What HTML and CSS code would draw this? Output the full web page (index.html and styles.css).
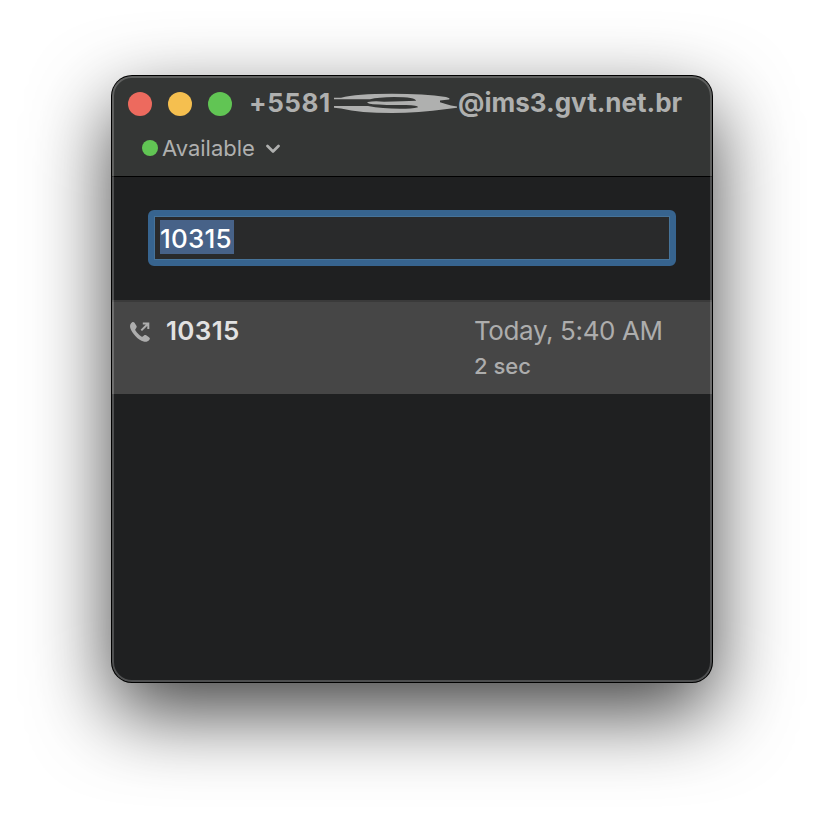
FILE: index.html
```html
<!DOCTYPE html>
<html lang="en">
<head>
<meta charset="utf-8">
<title>Phone</title>
<link rel="stylesheet" href="styles.css">
</head>
<body>
<main class="window">
  <header class="titlebar">
    <div class="title-row">
      <span class="light close"></span>
      <span class="light minimize"></span>
      <span class="light expand"></span>
      <h1 class="title"><span class="prefix">+5581</span><svg class="scribble" width="124" height="22" viewBox="0 0 124 22"><path d="M0 5.8H7Q22 1.8 58 1.8Q90 1.8 112 5Q117 6.3 115 7.5L106 8.6V10.2Q112 12 117 13.6L123 14.4V15.8L113 17Q84 21 58 21Q26 21 7 16.5L0 15.8V14H34Q48 16.8 66 16.8Q78 16.8 84 15.2Q84 13.4 72 13.1Q50 13 39 12.2Q31 11.1 34 10Q40 8.8 50 9.7Q70 9.5 82 8.8Q82 5 60 5Q44 5.2 36 7.3H0Z" fill="#afb0af"/></svg><span class="domain">@ims3.gvt.net.br</span></h1>
    </div>
    <div class="status">
      <span class="dot"></span>
      <span class="status-text">Available</span>
      <svg class="chevron" width="14" height="10" viewBox="0 0 14 10"><path d="M1.5 2L7 7.5L12.5 2" fill="none" stroke="#afb0af" stroke-width="2.7" stroke-linecap="round" stroke-linejoin="round"/></svg>
    </div>
  </header>
  <section class="dial">
    <div class="field"><span class="selected">10315</span></div>
  </section>
  <section class="call">
    <svg class="call-icon" width="22" height="22" viewBox="0 0 22 22"><path d="M2.2 1.2C3.1.6 3.9 1 4.5 1.8L6.4 4.8C6.9 5.6 6.8 6.3 6.2 7L5.4 8.2C5.1 8.6 5.2 9 5.5 9.5C7 11.8 9 13.9 11.4 15.4C11.9 15.7 12.3 15.7 12.7 15.4L14 14.4C14.7 13.8 15.4 13.8 16.2 14.3L19 16.2C20 16.9 20.2 17.7 19.4 18.7C17.9 20.5 16 21.2 13.6 20.5C7.9 18.8 1.8 12 .3 6.9C-.4 4.5.4 2.6 2.2 1.2Z" fill="#adadad"/><path d="M11.3 9.4L18 2.7M12.8 2.4H18.3V7.9" fill="none" stroke="#adadad" stroke-width="2"/></svg>
    <span class="number">10315</span>
    <div class="details"><span class="time">Today, 5:40 AM</span><span class="duration">2 sec</span></div>
  </section>
</main>
</body>
</html>
```
FILE: styles.css
```css
* { box-sizing: border-box; }
body {
  margin: 0;
  height: 830px;
  padding: 76px 112px;
  overflow: hidden;
  background: #fff;
  font-family: Inter, "Liberation Sans", sans-serif;
}
.window {
  position: relative;
  width: 600px;
  height: 606px;
  overflow: hidden;
  border-radius: 20px;
  background: #1f2021;
  box-shadow: 0 0 0 1px #000, 0 30px 80px rgba(0,0,0,.75);
}
.window::after {
  content: "";
  position: absolute;
  inset: 0;
  border: 2px solid rgba(255,255,255,.21);
  border-radius: 20px;
}
.titlebar {
  height: 101px;
  border-bottom: 1px solid #000;
  background: #343635;
  color: #afb0af;
}
.title-row {
  display: flex;
  align-items: center;
  height: 56px;
  padding-left: 16px;
}
.light {
  flex: none;
  width: 24px;
  height: 24px;
  margin-right: 16px;
  border-radius: 50%;
}
.close { background: #ed6a5e; }
.minimize { background: #f5bf4f; }
.expand { background: #61c554; }
.title {
  display: flex;
  align-items: center;
  margin: 0 0 2px 1px;
  font-size: 26px;
  font-weight: 700;
  line-height: 32px;
  white-space: nowrap;
}
.prefix { width: 85px; letter-spacing: .55px; }
.scribble { flex: none; width: 124px; margin-right: 0; }
.status {
  display: flex;
  align-items: center;
  height: 32px;
  padding-left: 30px;
  font-size: 22px;
}
.dot {
  width: 16px;
  height: 16px;
  margin-right: 4px;
  border-radius: 50%;
  background: #61c554;
}
.status-text { width: 104px; }
.chevron { margin-top: 2px; }
.dial { height: 123px; padding: 33px 36px 0; }
.field {
  display: flex;
  align-items: center;
  height: 56px;
  padding-left: 6px;
  border: 6px solid #37648f;
  border-radius: 6px;
  background: #292a2b;
  box-shadow: inset 0 0 0 1px #467399, inset 0 -1px 0 #687b86;
}
.selected {
  width: 74px;
  height: 34px;
  margin-top: -2px;
  background: #476288;
  color: #fff;
  font-size: 26px;
  font-weight: 500;
  letter-spacing: .2px;
  line-height: 37px;
}
.call {
  display: flex;
  height: 94px;
  padding: 13px 0 0 18px;
  border-top: 2px solid #3a3a3a;
  background: #464646;
  color: #adadad;
}
.call-icon { flex: none; margin: 6px 14px 0 0; }
.number {
  width: 308px;
  color: #e2e2e2;
  font-size: 26px;
  font-weight: 600;
  letter-spacing: .35px;
  line-height: 32px;
}
.details { display: flex; flex-direction: column; white-space: nowrap; }
.time { font-size: 26px; letter-spacing: -.38px; line-height: 32px; }
.duration { margin-top: 5px; font-size: 22px; font-weight: 500; line-height: 28px; }
```
